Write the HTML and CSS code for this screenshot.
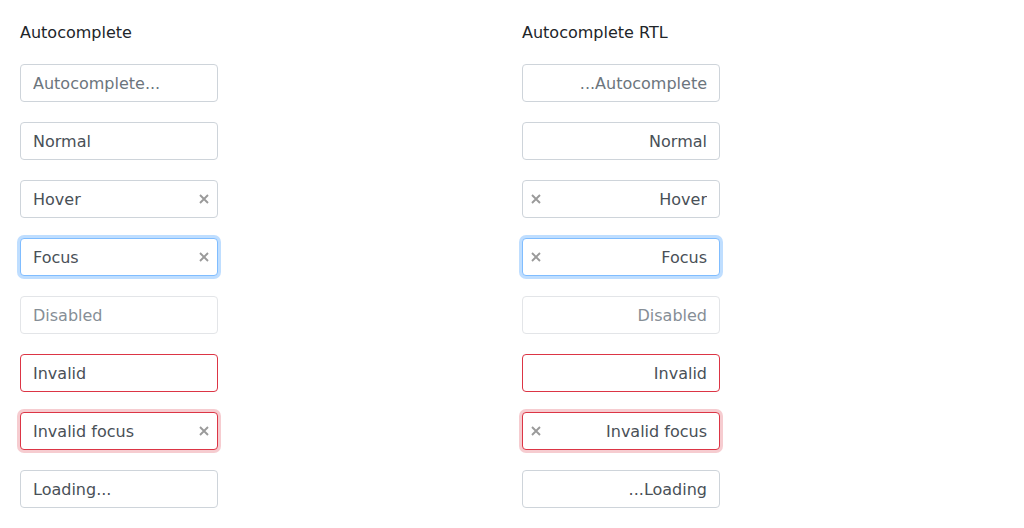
FILE: index.html
```html
<!DOCTYPE html>
<html>
<head>
<meta charset="utf-8">
<link rel="stylesheet" href="styles.css">
</head>
<body>
<div class="page">
  <section class="col">
    <h2 class="title">Autocomplete</h2>
    <div class="field"><input class="ac" placeholder="Autocomplete..."></div>
    <div class="field"><input class="ac" value="Normal"></div>
    <div class="field"><input class="ac" value="Hover"><span class="clear"><svg width="10" height="10" viewBox="0 0 10 10"><path d="M1 1L9 9M9 1L1 9"/></svg></span></div>
    <div class="field"><input class="ac focus" value="Focus"><span class="clear"><svg width="10" height="10" viewBox="0 0 10 10"><path d="M1 1L9 9M9 1L1 9"/></svg></span></div>
    <div class="field"><input class="ac" value="Disabled" disabled></div>
    <div class="field"><input class="ac invalid" value="Invalid"></div>
    <div class="field"><input class="ac invalid focus" value="Invalid focus"><span class="clear"><svg width="10" height="10" viewBox="0 0 10 10"><path d="M1 1L9 9M9 1L1 9"/></svg></span></div>
    <div class="field"><input class="ac" value="Loading..."></div>
  </section>
  <section class="col rtl">
    <h2 class="title">Autocomplete RTL</h2>
    <div class="field"><input class="ac" dir="rtl" placeholder="Autocomplete..."></div>
    <div class="field"><input class="ac" dir="rtl" value="Normal"></div>
    <div class="field"><input class="ac" dir="rtl" value="Hover"><span class="clear"><svg width="10" height="10" viewBox="0 0 10 10"><path d="M1 1L9 9M9 1L1 9"/></svg></span></div>
    <div class="field"><input class="ac focus" dir="rtl" value="Focus"><span class="clear"><svg width="10" height="10" viewBox="0 0 10 10"><path d="M1 1L9 9M9 1L1 9"/></svg></span></div>
    <div class="field"><input class="ac" dir="rtl" value="Disabled" disabled></div>
    <div class="field"><input class="ac invalid" dir="rtl" value="Invalid"></div>
    <div class="field"><input class="ac invalid focus" dir="rtl" value="Invalid focus"><span class="clear"><svg width="10" height="10" viewBox="0 0 10 10"><path d="M1 1L9 9M9 1L1 9"/></svg></span></div>
    <div class="field"><input class="ac" dir="rtl" value="Loading..."></div>
  </section>
</div>
</body>
</html>
```
FILE: styles.css
```css
html, body {
  margin: 0;
  padding: 0;
  background: #fff;
}
body {
  font-family: "DejaVu Sans", sans-serif;
  font-size: 16px;
  color: #212529;
}
.page {
  display: grid;
  grid-template-columns: 1fr 1fr;
  padding: 21px 0 0 20px;
}
.col {
  display: flex;
  flex-direction: column;
  align-items: flex-start;
  gap: 20px;
}
.title {
  margin: 0;
  font-size: 16px;
  font-weight: normal;
  line-height: 23px;
  color: #212529;
}
.field {
  position: relative;
  width: 198px;
  height: 38px;
}
.ac {
  box-sizing: border-box;
  width: 198px;
  height: 38px;
  margin: 0;
  padding: 6px 12px;
  border: 1px solid #ced4da;
  border-radius: 4px;
  font-family: "DejaVu Sans", sans-serif;
  font-size: 16px;
  color: #495057;
  background: #fff;
  outline: none;
}
.ac::placeholder {
  color: #6c757d;
  opacity: 1;
}
.ac:disabled {
  color: #868e96;
  border-color: #e3e5e8;
  background: #fff;
}
.ac.focus {
  border-color: #80bdff;
  box-shadow: 0 0 0 3px rgba(0, 123, 255, 0.25);
}
.ac.invalid {
  border-color: #dc3545;
}
.ac.invalid.focus {
  border-color: #dc3545;
  box-shadow: 0 0 0 3px rgba(220, 53, 69, 0.25);
}
.clear {
  position: absolute;
  top: 14px;
  right: 9px;
  width: 10px;
  height: 10px;
  display: flex;
}
.rtl .clear {
  right: auto;
  left: 9px;
}
.clear svg path {
  stroke: #9a9a9a;
  stroke-width: 1.9;
  fill: none;
}
```
